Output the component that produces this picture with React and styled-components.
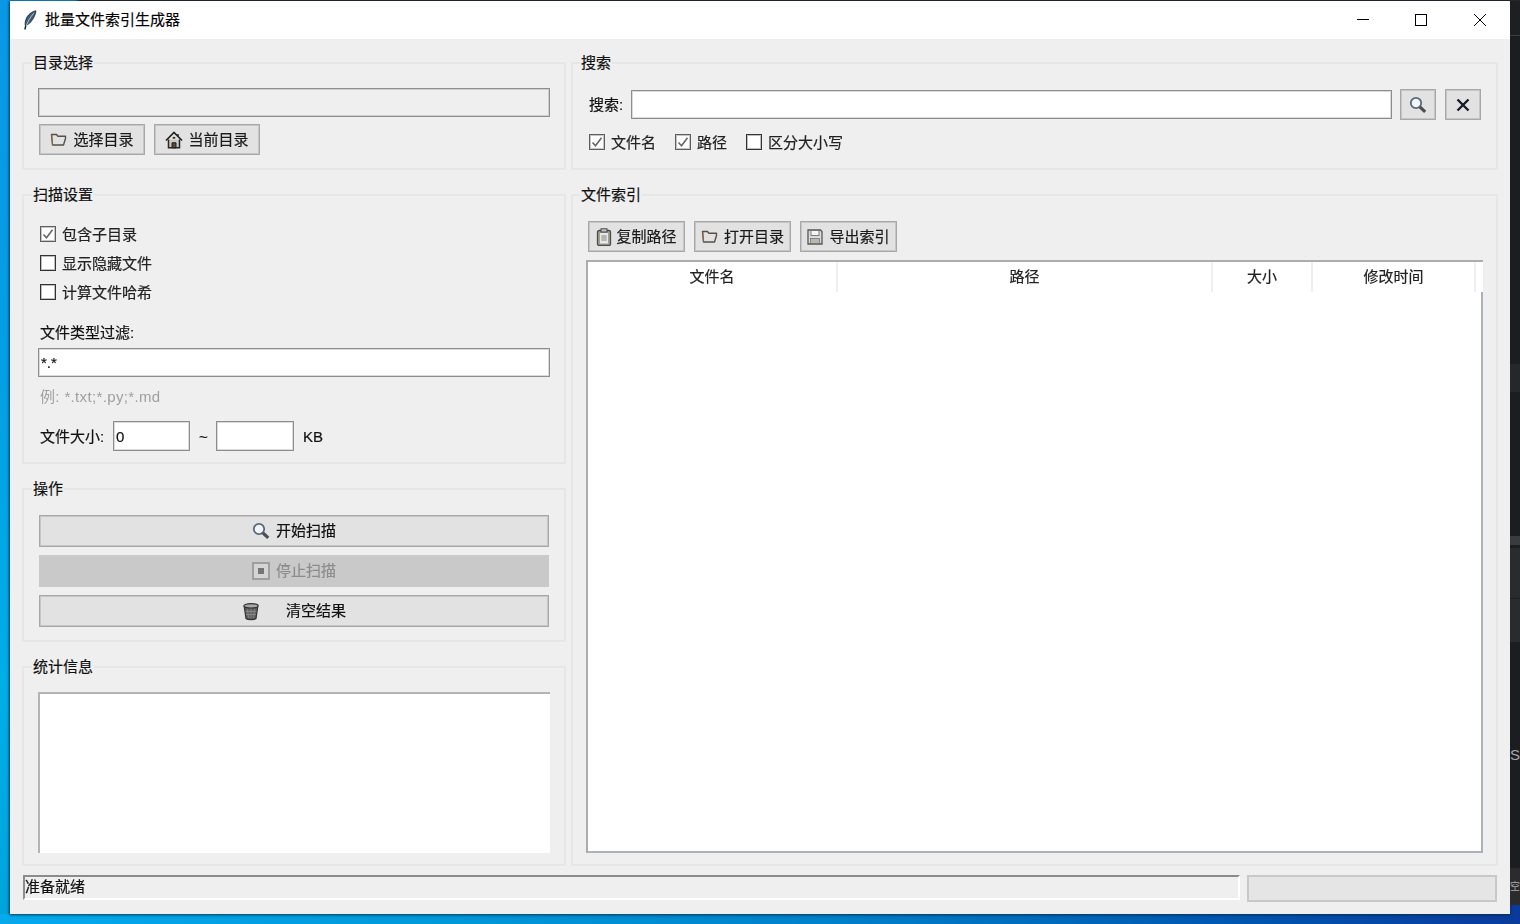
import React from 'react';
import styled, { createGlobalStyle } from 'styled-components';

const FONT = '"Liberation Sans", "Noto Sans CJK SC", sans-serif';

const Global = createGlobalStyle`
  html, body { margin: 0; padding: 0; }
  body { width: 1520px; height: 924px; overflow: hidden; font-family: ${FONT}; }
  * { box-sizing: border-box; }
`;

const Desktop = styled.div`
  width: 1520px;
  height: 924px;
  background: linear-gradient(to right, #05aaec 0%, #0098d8 30%, #0080c8 55%, #0058b0 80%, #0a3a9c 100%);
`;
const TopEdge = styled.div`
  height: 1px;
  background: linear-gradient(to right, #0a98e4 0, #0a98e4 75px, #26282b 80px);
`;
const DesktopRow = styled.div`
  display: flex;
  align-items: flex-start;
  height: 913px;
`;
const LeftStrip = styled.div`
  width: 10px;
  height: 100%;
  background: linear-gradient(to bottom, #0a98e6 0%, #049fe4 40%, #00aee8 75%, #00a4dc 100%);
`;
const RightStrip = styled.div`
  width: 10px;
  height: 904px;
  display: flex;
  flex-direction: column;
  overflow: hidden;
`;
const StripBand = styled.div`
  height: ${p => p.$h}px;
  flex: none;
  background: ${p => p.$c};
  color: #a8a8a8;
  font: ${p => p.$fs || 15}px/${p => p.$h}px "Liberation Sans", "Noto Sans CJK SC", sans-serif;
  white-space: nowrap;
`;

const Window = styled.div`
  width: 1500px;
  height: 100%;
  display: flex;
  flex-direction: column;
  background: #efefef;
  box-shadow: -1px 0 2px rgba(10, 40, 70, .65), 0 1px 3px rgba(10, 40, 70, .7);
  color: #111;
  font-size: 15px;
  line-height: 20px;
`;
const TitleBar = styled.div`
  height: 38px;
  flex: none;
  display: flex;
  align-items: center;
  padding-left: 13px;
  background: #fff;
  color: #000;
`;
const TitleText = styled.span`
  margin: 0 0 0 8px;
  -webkit-text-stroke: .15px currentColor;
`;
const WinControls = styled.div`
  margin-left: auto;
  margin-right: 1px;
  display: flex;
`;
const WinControl = styled.div`
  width: 58.5px;
  height: 38px;
  display: flex;
  align-items: center;
  justify-content: center;
`;

const Body = styled.div`
  flex: 1;
  display: flex;
  flex-direction: column;
  padding: 23px 12px 13px;
  min-height: 0;
  filter: blur(0.3px);
  -webkit-text-stroke: .2px currentColor;
`;
const Columns = styled.div`
  height: 804px;
  flex: none;
  display: flex;
  gap: 5px;
`;
const Column = styled.div`
  width: ${p => p.$w}px;
  flex: none;
  display: flex;
  flex-direction: column;
  gap: 24px;
`;
const Group = styled.section`
  position: relative;
  height: ${p => (p.$h ? `${p.$h}px` : 'auto')};
  flex: ${p => (p.$h ? 'none' : '1')};
  min-height: 0;
  display: flex;
  flex-direction: column;
  border: 2px solid #e6e6e6;
  padding: ${p => p.$pad};
`;
const Legend = styled.h2`
  position: absolute;
  top: -11px;
  left: ${p => p.$l || 8}px;
  margin: 0;
  padding: 0 1px 0 1px;
  background: #efefef;
  font-size: 15px;
  line-height: 20px;
  font-weight: 400;
`;

const TextField = styled.input`
  display: block;
  height: ${p => p.$h || 29}px;
  width: ${p => (p.$w ? `${p.$w}px` : '100%')};
  flex: ${p => (p.$grow ? '1' : 'none')};
  min-width: 0;
  padding: 0 2px;
  border: 1px solid #8e8e8e;
  box-shadow: inset 0 0 0 1px rgba(150, 150, 150, .35);
  border-radius: 0;
  outline: none;
  background: ${p => (p.$readonly ? '#efefef' : '#fff')};
  color: #111;
  font: 15px/20px ${FONT};
  -webkit-text-stroke: .2px currentColor;
`;

const ButtonRow = styled.div`
  display: flex;
  gap: 9px;
  margin: ${p => p.$m || 0};
`;
const ToolButton = styled.button`
  width: ${p => p.$w}px;
  height: 31px;
  flex: none;
  display: flex;
  align-items: center;
  justify-content: center;
  gap: ${p => p.$gap || 6}px;
  padding: 0;
  border: 1px solid #a8a8a8;
  box-shadow: inset 0 0 0 1px rgba(170, 170, 170, .5);
  border-radius: 0;
  background: #e2e2e2;
  color: #1a1a1a;
  font: 15px/20px ${FONT};
  -webkit-text-stroke: .2px currentColor;
`;
const WideButton = styled.button`
  width: 510px;
  height: 32px;
  flex: none;
  display: flex;
  align-items: center;
  justify-content: center;
  gap: ${p => p.$gap || 6}px;
  padding: 0;
  border: 1px solid ${p => (p.disabled ? '#c9c9c9' : '#a8a8a8')};
  box-shadow: ${p => (p.disabled ? 'none' : 'inset 0 0 0 1px rgba(170, 170, 170, .5)')};
  border-radius: 0;
  background: ${p => (p.disabled ? '#c9c9c9' : '#e2e2e2')};
  color: ${p => (p.disabled ? '#8c8c8c' : '#111')};
  font: 15px/20px ${FONT};
  -webkit-text-stroke: .2px currentColor;
`;

const CheckRow = styled.label`
  height: 20px;
  display: flex;
  align-items: center;
  gap: 6px;
  color: #222;
`;
const CheckText = styled.span`
  padding-top: 2px;
`;
const CheckBox = styled.span`
  width: 16px;
  height: 16px;
  flex: none;
  display: flex;
  align-items: center;
  justify-content: center;
  border: 1px solid ${p => (p.$on ? '#5e5e5e' : '#333')};
  box-shadow: inset 0 0 0 1px ${p => (p.$on ? 'rgba(110,110,110,.4)' : 'rgba(70,70,70,.35)')};
  background: #fff;
`;
const ScanChecks = styled.div`
  display: flex;
  flex-direction: column;
  gap: 9px;
  margin-left: 2px;
`;
const FieldLabel = styled.div`
  margin: ${p => p.$m || 0};
  flex: none;
`;
const Hint = styled.div`
  margin: 10px 0 0 2px;
  color: #a0a0a0;
  letter-spacing: .35px;
  -webkit-text-stroke: 0;
`;
const SizeRow = styled.div`
  display: flex;
  align-items: center;
  height: 30px;
  margin: 14px 0 0 2px;
`;
const SizeLabel = styled.span`
  width: 73px;
  flex: none;
  padding-top: 2px;
`;
const Tilde = styled.span`
  width: 26px;
  flex: none;
  padding: 2px 0 0 9px;
`;
const Unit = styled.span`
  margin-left: 9px;
  padding-top: 2px;
`;

const OpsStack = styled.div`
  display: flex;
  flex-direction: column;
  gap: 8px;
`;
const StatsArea = styled.div`
  height: 161px;
  background: #fff;
  border-top: 2px solid #b4b4b4;
  border-left: 2px solid #b4b4b4;
`;

const SearchRow = styled.div`
  display: flex;
  align-items: center;
`;
const SearchLabel = styled.span`
  width: 42px;
  flex: none;
`;
const IconButton = styled(ToolButton)`
  margin-left: ${p => p.$ml}px;
`;
const OptionsRow = styled.div`
  display: flex;
  gap: 19px;
  margin-top: 12px;
`;

const TableFrame = styled.div`
  flex: 1;
  min-height: 0;
  margin: 8px 0 0 -2px;
  display: flex;
  flex-direction: column;
  background: #fff;
  border-top: 2px solid #acacac;
  border-left: 2px solid #acacac;
`;
const TableHead = styled.div`
  height: 30px;
  flex: none;
  display: flex;
`;
const HeadCell = styled.div`
  width: ${p => p.$w}px;
  flex: none;
  display: flex;
  align-items: center;
  justify-content: center;
  padding-bottom: 1px;
  border-right: 2px solid #efefef;
  color: #222;
`;
const TableBody = styled.div`
  flex: 1;
  border-right: 2px solid #adb1b8;
  border-bottom: 2px solid #adb1b8;
`;

const StatusRow = styled.div`
  display: flex;
  align-items: flex-start;
  gap: 7px;
  margin: 9px 0 0 1px;
`;
const StatusText = styled.div`
  width: 1217px;
  height: 25px;
  flex: none;
  overflow: hidden;
  border-style: solid;
  border-width: 2px;
  border-color: #8c8c8c #fff #fff #8c8c8c;
  line-height: 20px;
`;
const ProgressBar = styled.div`
  width: 250px;
  height: 27px;
  flex: none;
  background: #e5e5e5;
  border: 2px solid #c8c8c8;
`;

/* ---- drawings ---- */
const Svg = styled.svg`
  flex: none;
  display: block;
`;
const Feather = () => (
  <Svg width="14" height="20" viewBox="0 0 14 20">
    <path d="M13 .8C9 1.500 4.500 4.800 3 9.200c-.8 2.300-1 4.200-.8 6.200 2-.2 4.300-1.800 5.900-3.800C10.600 8.500 12.500 4.800 13 .8z" fill="#3d5a78" stroke="#16263a" strokeWidth=".8" />
    <path d="M10.800 3.200C7.500 6.800 4.300 12 2.200 18.800" fill="none" stroke="#c4d4e0" strokeWidth=".9" />
    <path d="M2.800 15.500L1.800 19.500" fill="none" stroke="#111" strokeWidth="1.300" />
  </Svg>
);
const FolderIcon = () => (
  <Svg width="17" height="15" viewBox="0 0 17 15">
    <path d="M1.500 2.500h5l1.200 1.700h7.800v2.300l-2 6.500H2.500z" fill="none" stroke="#565048" strokeWidth="1.400" strokeLinejoin="round" />
    <path d="M1.800 3l.7 9.700" fill="none" stroke="#9a6a32" strokeWidth=".8" />
  </Svg>
);
const HomeIcon = () => (
  <Svg width="18" height="18" viewBox="0 0 18 18">
    <path d="M1 9.500L9 1.500l8 8" fill="none" stroke="#222" strokeWidth="1.700" />
    <path d="M13 3v3" stroke="#333" strokeWidth="1.600" />
    <path d="M3.500 8.500v8.300h11V8.500" fill="#cfcac4" stroke="#262626" strokeWidth="1.500" />
    <path d="M7 16.800v-5h4v5z" fill="#5a4a3c" stroke="#1c1c1c" strokeWidth="1" />
    <path d="M7.700 6.800h2.600" stroke="#333" strokeWidth="1.800" />
  </Svg>
);
const SearchIcon = () => (
  <Svg width="18" height="18" viewBox="0 0 18 18">
    <circle cx="7" cy="7" r="5.200" fill="#f2f5f8" stroke="#56687c" strokeWidth="1.800" />
    <path d="M10.800 10.800l5.400 5" fill="none" stroke="#4a4d52" strokeWidth="3.200" />
  </Svg>
);
const StopIcon = () => (
  <Svg width="18" height="18" viewBox="0 0 18 18">
    <rect x="1" y="1" width="16" height="16" fill="#d4d4d4" stroke="#9a9a9a" strokeWidth="1.800" />
    <rect x="6" y="6" width="6" height="6" fill="#757575" />
  </Svg>
);
const TrashIcon = () => (
  <Svg width="18" height="19" viewBox="0 0 18 19">
    <path d="M2.200 4.500L4 16.500c1.500 1.500 8.500 1.500 10 0L15.800 4.500" fill="#5e5e5e" stroke="#333" strokeWidth="1.200" />
    <path d="M5.500 7l1 9M9 7v9.500M12.500 7l-1 9M3.500 9.500h11M4 12.500h10" stroke="#8e8e8e" strokeWidth=".8" />
    <ellipse cx="9" cy="3.800" rx="7.200" ry="2.200" fill="#a8a8a8" stroke="#333" strokeWidth="1.200" />
  </Svg>
);
const ClipboardIcon = () => (
  <Svg width="16" height="18" viewBox="0 0 16 18">
    <rect x="1.500" y="2.500" width="13" height="15" rx="1.500" fill="#a89e90" stroke="#4a4d50" strokeWidth="1.300" />
    <rect x="4" y="5" width="8" height="10.500" fill="#e8e8e8" />
    <path d="M5.300 8h5.400M5.300 10h5.400M5.300 12h5.400" stroke="#777" strokeWidth=".9" />
    <rect x="5" y=".8" width="6" height="3.200" fill="#c4c4c4" stroke="#45484c" strokeWidth="1" />
  </Svg>
);
const SaveIcon = () => (
  <Svg width="16" height="16" viewBox="0 0 16 16">
    <path d="M1 1h12.500L15 2.500V15H1z" fill="#dcdcdc" stroke="#565656" strokeWidth="1.300" />
    <rect x="4" y="1.500" width="8" height="5" fill="#f6f6f6" stroke="#707070" strokeWidth=".9" />
    <rect x="3.500" y="9.500" width="9" height="5" fill="#bdb6aa" stroke="#6a6a6a" strokeWidth=".7" />
  </Svg>
);
const CloseGlyph = () => (
  <Svg width="14" height="14" viewBox="0 0 14 14">
    <path d="M1.500 1.500l11 11M12.500 1.500l-11 11" fill="none" stroke="#141c28" strokeWidth="2.400" />
  </Svg>
);
const Check = () => (
  <Svg width="12" height="12" viewBox="0 0 12 12">
    <path d="M1.500 6.500L4.500 9.800 10.500 1.800" fill="none" stroke="#666" strokeWidth="1.600" />
  </Svg>
);
const MinGlyph = () => (
  <Svg width="12" height="12" viewBox="0 0 12 12"><path d="M0 5.500h12" stroke="#000" strokeWidth="1" /></Svg>
);
const MaxGlyph = () => (
  <Svg width="12" height="12" viewBox="0 0 12 12"><rect x=".5" y=".5" width="11" height="11" fill="none" stroke="#000" strokeWidth="1" /></Svg>
);
const XGlyph = () => (
  <Svg width="12" height="12" viewBox="0 0 12 12"><path d="M0 0l12 12M12 0L0 12" stroke="#000" strokeWidth="1" /></Svg>
);

const Option = ({ on, children }) => (
  <CheckRow>
    <CheckBox $on={on}>{on && <Check />}</CheckBox>
    <CheckText>{children}</CheckText>
  </CheckRow>
);

const columns = [
  ['文件名', 250],
  ['路径', 375],
  ['大小', 100],
  ['修改时间', 163],
];

const stripBands = [
  [34, '#1e1f22', ''], [1, '#3c3d40', ''], [28, '#1c1d20', ''], [300, '#1c1d20', ''],
  [28, '#26272b', ''], [144, '#1c1d20', ''], [9, '#3a3b3d', ''], [3, '#1c1d20', ''],
  [50, '#2a2b2d', ''], [1, '#1c1d20', ''], [43, '#2a2b2d', ''], [103, '#1c1d20', ''],
  [20, '#1c1d20', 'S'], [103, '#1c1d20', ''], [37, '#2b2b2d', '空', 10],
];

export default function App() {
  return (
    <Desktop>
      <Global />
      <TopEdge />
      <DesktopRow>
        <LeftStrip />
        <Window>
          <TitleBar>
            <Feather />
            <TitleText>批量文件索引生成器</TitleText>
            <WinControls>
              <WinControl><MinGlyph /></WinControl>
              <WinControl><MaxGlyph /></WinControl>
              <WinControl><XGlyph /></WinControl>
            </WinControls>
          </TitleBar>
          <Body>
            <Columns>
              <Column $w={544}>
                <Group $h={108} $pad="24px 14px 0">
                  <Legend>目录选择</Legend>
                  <TextField $readonly readOnly />
                  <ButtonRow $m="7px 0 0 1px">
                    <ToolButton $w={106}><FolderIcon />选择目录</ToolButton>
                    <ToolButton $w={106} $gap={5}><HomeIcon />当前目录</ToolButton>
                  </ButtonRow>
                </Group>
                <Group $h={270} $pad="28px 14px 0">
                  <Legend>扫描设置</Legend>
                  <ScanChecks>
                    <Option on>包含子目录</Option>
                    <Option>显示隐藏文件</Option>
                    <Option>计算文件哈希</Option>
                  </ScanChecks>
                  <FieldLabel $m="21px 0 5px 2px">文件类型过滤:</FieldLabel>
                  <TextField defaultValue="*.*" />
                  <Hint>例: *.txt;*.py;*.md</Hint>
                  <SizeRow>
                    <SizeLabel>文件大小:</SizeLabel>
                    <TextField $w={77} $h={30} defaultValue="0" />
                    <Tilde>~</Tilde>
                    <TextField $w={78} $h={30} />
                    <Unit>KB</Unit>
                  </SizeRow>
                </Group>
                <Group $h={154} $pad="25px 15px 0">
                  <Legend>操作</Legend>
                  <OpsStack>
                    <WideButton><SearchIcon />开始扫描</WideButton>
                    <WideButton disabled><StopIcon />停止扫描</WideButton>
                    <WideButton $gap={26}><TrashIcon />清空结果</WideButton>
                  </OpsStack>
                </Group>
                <Group $h={200} $pad="24px 14px 0">
                  <Legend>统计信息</Legend>
                  <StatsArea />
                </Group>
              </Column>
              <Column $w={927}>
                <Group $h={108} $pad="25px 15px 0 16px">
                  <Legend $l={7}>搜索</Legend>
                  <SearchRow>
                    <SearchLabel>搜索:</SearchLabel>
                    <TextField $grow />
                    <IconButton $w={36} $ml={8}><SearchIcon /></IconButton>
                    <IconButton $w={36} $ml={9}><CloseGlyph /></IconButton>
                  </SearchRow>
                  <OptionsRow>
                    <Option on>文件名</Option>
                    <Option on>路径</Option>
                    <Option>区分大小写</Option>
                  </OptionsRow>
                </Group>
                <Group $pad="25px 13px 11px 15px">
                  <Legend $l={7}>文件索引</Legend>
                  <ButtonRow>
                    <ToolButton $w={97} $gap={4}><ClipboardIcon />复制路径</ToolButton>
                    <ToolButton $w={97}><FolderIcon />打开目录</ToolButton>
                    <ToolButton $w={97}><SaveIcon />导出索引</ToolButton>
                  </ButtonRow>
                  <TableFrame>
                    <TableHead>
                      {columns.map(([name, w]) => <HeadCell key={name} $w={w}>{name}</HeadCell>)}
                    </TableHead>
                    <TableBody />
                  </TableFrame>
                </Group>
              </Column>
            </Columns>
            <StatusRow>
              <StatusText>准备就绪</StatusText>
              <ProgressBar />
            </StatusRow>
          </Body>
        </Window>
        <RightStrip>
          {stripBands.map(([h, c, t, fs], i) => <StripBand key={i} $h={h} $c={c} $fs={fs}>{t}</StripBand>)}
        </RightStrip>
      </DesktopRow>
    </Desktop>
  );
}
